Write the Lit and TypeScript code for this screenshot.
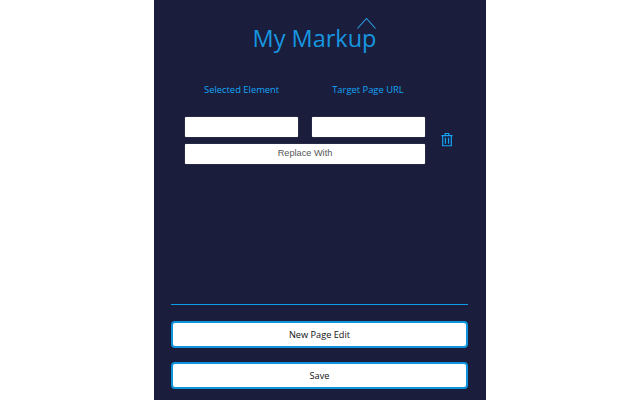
import { LitElement, html, css } from "lit";
import { customElement } from "lit/decorators.js";

@customElement("app-root")
export class AppRoot extends LitElement {
  static styles = css`
    :host { display: block; height: 400px; background: #fff; font-family: "Open Sans", sans-serif; }
    .panel { box-sizing: border-box; width: 332px; height: 400px; margin: 0 auto; background: #1a1e3c; display: flex; flex-direction: column; padding: 0 18px 0 17px; overflow: hidden; }
    .logo { align-self: center; position: relative; margin: 20px 0 0 -10px; color: #1796e0; font-size: 23.5px; line-height: 36px; height: 36px; }
    .chev { position: absolute; right: 0; top: -3px; width: 20px; height: 12px; }
    .labels { display: flex; margin: 24px 0 0 33px; color: #14a4f6; font-size: 9.4px; line-height: 20px; gap: 53px; height: 20px; }
    .row { display: flex; align-items: center; margin: 17px 0 0 14px; gap: 16px; }
    .fields { display: grid; grid-template-columns: 113px 113px; column-gap: 14px; row-gap: 7px; width: 240px; }
    .box { height: 20px; background: #fff; border-radius: 1px; box-shadow: 0 0 1px #999; }
    .replace { grid-column: 1 / 3; font: 9.2px/19px "Liberation Sans", Arial, sans-serif; color: #555; text-align: center; }
    .trash { width: 12px; height: 15px; display: block; margin-bottom: 2px; }
    .spacer { flex: 1; }
    .rule { height: 1px; background: #0e9be8; }
    .btn { height: 27px; box-sizing: border-box; background: #fff; border: 2px solid #0e93de; border-radius: 4px; color: #111; font-size: 9.2px; display: flex; align-items: center; justify-content: center; }
    .b1 { margin-top: 16px; }
    .b2 { margin: 14px 0 11px; }
  `;
  render() {
    return html`<div class="panel">
      <div class="logo">My Markup
        <svg class="chev" viewBox="0 0 20 12" fill="none" stroke="#2f9fe4" stroke-width="1.1"><path d="M1.5 11.5 L10.5 1.5 L19.5 11.5"/></svg>
      </div>
      <div class="labels"><span>Selected Element</span><span>Target Page URL</span></div>
      <div class="row">
        <div class="fields">
          <div class="box"></div><div class="box"></div>
          <div class="box replace">Replace With</div>
        </div>
        <svg class="trash" viewBox="0 0 14 16" fill="none" stroke="#14a4f6" stroke-width="1.4">
          <path d="M.5 3.5h13M5 3.5V1h4v2.5M2 3.5v11.8h10V3.5M5.2 6v7M8.8 6v7"/>
        </svg>
      </div>
      <div class="spacer"></div>
      <div class="rule"></div>
      <div class="btn b1">New Page Edit</div>
      <div class="btn b2">Save</div>
    </div>`;
  }
}
